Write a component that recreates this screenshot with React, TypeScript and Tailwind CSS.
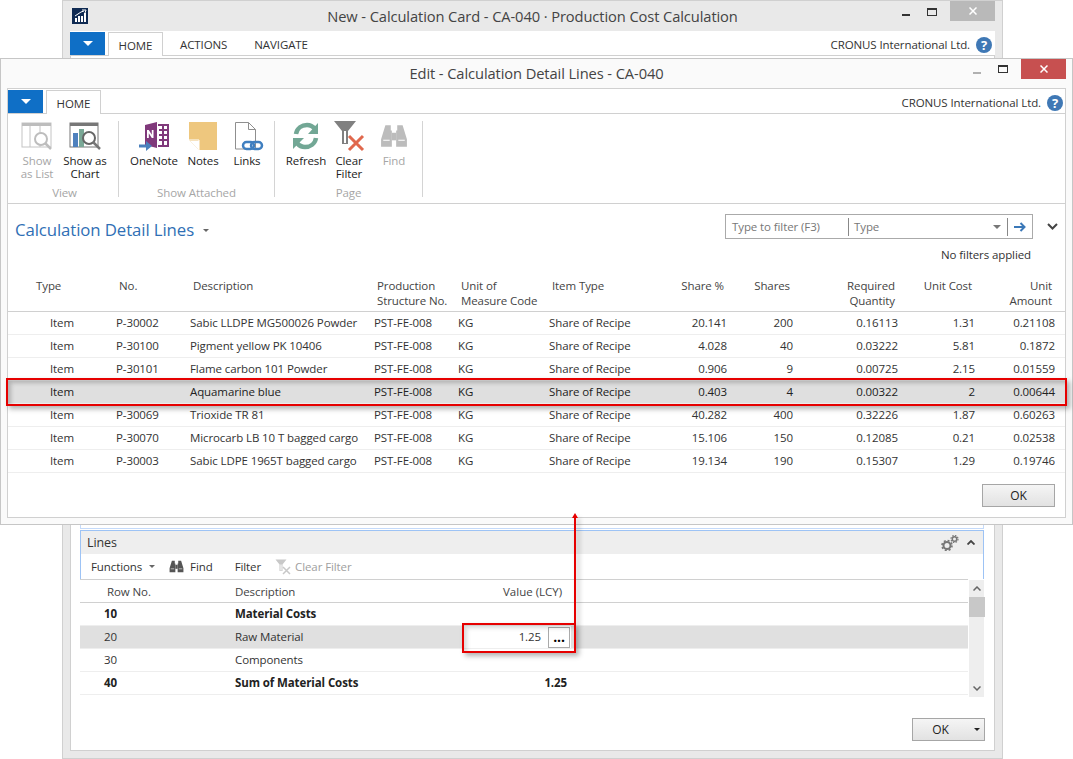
const F = "font-['Open_Sans','Noto_Sans',sans-serif]";

function Logo() {
  return (
    <svg width="16" height="16" viewBox="0 0 16 16" className="shrink-0">
      <rect width="16" height="16" fill="#0f2a52" />
      <rect x="3" y="10" width="2" height="4" fill="#fff" />
      <rect x="6" y="8" width="2" height="6" fill="#fff" />
      <rect x="9" y="8" width="2" height="6" fill="#fff" />
      <rect x="12" y="5" width="2" height="9" fill="#fff" />
      <path d="M3 8 L9 4 L12 3 M10 2 L14 2 L13 5" stroke="#fff" fill="none" strokeWidth="1" />
    </svg>
  );
}

function Help() {
  return (
    <span className="w-4 h-4 rounded-full bg-[#3f78b5] text-white text-[13px] font-bold leading-4 text-center block">?</span>
  );
}

function Caret() {
  return <span className="block w-0 h-0 border-x-[5px] border-x-transparent border-t-[5px] border-t-white" />;
}

function CloseX() {
  return (
    <svg width="8" height="8" viewBox="0 0 8 8" fill="none" stroke="#fff" strokeWidth="1.500"><path d="M.5.5l7 7M7.500.5l-7 7" /></svg>
  );
}

function ListIcon() {
  return (
    <svg width="32" height="28" viewBox="0 0 32 28">
      <rect x="1" y="1" width="29" height="24" fill="#fff" stroke="#c4c4c4" />
      <rect x="1" y="1" width="29" height="3" fill="#bdbdbd" />
      <path d="M9 4V25M19 4V25" stroke="#c4c4c4" />
      <circle cx="20" cy="17" r="6" fill="#fff" stroke="#bdbdbd" strokeWidth="2" />
      <path d="M24 21l6 6" stroke="#bdbdbd" strokeWidth="2.500" />
    </svg>
  );
}
function ChartIcon() {
  return (
    <svg width="32" height="28" viewBox="0 0 32 28">
      <rect x="1" y="1" width="28" height="24" fill="#fff" stroke="#777" />
      <rect x="1" y="1" width="28" height="3" fill="#777" />
      <rect x="4" y="11" width="5" height="14" fill="#4f81bd" />
      <rect x="10" y="7" width="5" height="18" fill="#7aa896" />
      <circle cx="20" cy="16" r="6" fill="#fff" stroke="#666" strokeWidth="2" />
      <path d="M24 20l7 7" stroke="#777" strokeWidth="2.500" />
    </svg>
  );
}
function OneNoteIcon() {
  return (
    <svg width="32" height="30" viewBox="0 0 32 30">
      <path d="M7 4 L19 1 V27 L7 24Z" fill="#80397b" />
      <path d="M20 4h10v21H20" fill="#fff" stroke="#80397b" strokeWidth="2" />
      <path d="M21 9h8M21 14h8M21 19h8M25 4v21" stroke="#80397b" strokeWidth="2" />
      <path d="M9 17V9h1.800l3 4.800V9h1.700v8h-1.700l-3-4.800V17z" fill="#fff" />
      <path d="M1 25h10" stroke="#4a80bc" strokeWidth="3" />
      <path d="M8 20l6 5-6 5z" fill="#4a80bc" />
    </svg>
  );
}
function NotesIcon() {
  return (
    <svg width="28" height="28" viewBox="0 0 28 28">
      <path d="M0 0h28v28H10L0 18z" fill="#eec77e" />
      <path d="M1 19h9v9z" fill="#fff" />
      <path d="M0 18h10v10" fill="none" stroke="#fff" />
    </svg>
  );
}
function LinksIcon() {
  return (
    <svg width="30" height="30" viewBox="0 0 30 30" className="ml-[3px]">
      <path d="M1.500 1.500h13l7 7V28h-20z" fill="#fff" stroke="#8f8f8f" />
      <path d="M14.500 1.500v7h7" fill="none" stroke="#8f8f8f" />
      <rect x="9" y="21" width="11" height="7" rx="3.500" fill="none" stroke="#3f7fc0" strokeWidth="2.500" />
      <rect x="17" y="21" width="11" height="7" rx="3.500" fill="none" stroke="#3f7fc0" strokeWidth="2.500" />
    </svg>
  );
}
function RefreshIcon() {
  return (
    <svg width="28" height="28" viewBox="0 0 28 28" fill="none">
      <path d="M4 12C5 6 10 3 15 3c3 0 6 1.500 8 4" stroke="#72a795" strokeWidth="4.500" />
      <path d="M26 1v11H16z" fill="#72a795" />
      <path d="M24 16c-1 6-6 9-11 9-3 0-6-1.500-8-4" stroke="#72a795" strokeWidth="4.500" />
      <path d="M1 27V16h11z" fill="#72a795" />
    </svg>
  );
}
function FilterXIcon({ small }: { small?: boolean }) {
  const s = small ? 16 : 32;
  return (
    <svg width={s} height={s} viewBox="0 0 32 32">
      <path d="M1 1h22L15 11v13h-6V11z" fill={small ? "#c8c8c8" : "#808080"} />
      <path d="M11 11h2v12h-2z" fill="#fff" />
      <path d="M16 16l14 14M30 16L16 30" stroke={small ? "#c8c8c8" : "#e0684d"} strokeWidth="3" />
    </svg>
  );
}
function BinocularsIcon({ color, size }: { color: string; size: number }) {
  return (
    <svg width={size} height={size} viewBox="0 0 26 26">
      <path d="M5 3h5v5h1v15H1v-7z" fill={color} />
      <path d="M21 3h-5v5h-1v15h10v-7z" fill={color} />
      <rect x="11" y="10" width="4" height="7" fill={color} />
      <path d="M3 17h6M17 17h6" stroke="#fff" />
    </svg>
  );
}
function Gears() {
  return (
    <svg width="18" height="16" viewBox="0 0 18 16" fill="none">
      <circle cx="6" cy="10.500" r="3.500" stroke="#777" strokeWidth="2" />
      <circle cx="6" cy="10.500" r="5" stroke="#777" strokeWidth="1.600" strokeDasharray="2 1.930" />
      <circle cx="13.500" cy="4" r="2.200" stroke="#777" strokeWidth="1.400" />
      <circle cx="13.500" cy="4" r="3.500" stroke="#777" strokeWidth="1.200" strokeDasharray="1.500 1.250" />
    </svg>
  );
}

function RibbonItem({ icon, label, width, disabled }: { icon: React.ReactNode; label: React.ReactNode; width: string; disabled?: boolean }) {
  return (
    <div className={`flex flex-col items-center shrink-0 ${width}`}>
      <div className="h-[30px] flex items-center justify-center">{icon}</div>
      <div className={`text-center leading-[13px] mt-[3px] whitespace-nowrap ${disabled ? "text-[#a6a6a6]" : "text-[#222]"}`}>{label}</div>
    </div>
  );
}

function Group({ label, children, width, pad }: { label: string; children: React.ReactNode; width: string; pad: string }) {
  return (
    <div className={`flex flex-col items-center border-r border-[#d4d4d4] h-[76px] shrink-0 ${width}`}>
      <div className={`flex flex-1 w-full justify-start ${pad}`}>{children}</div>
      <div className="text-[#a6a6a6] leading-[13px] -mb-[2px]">{label}</div>
    </div>
  );
}

const rows = [
  ["Item", "P-30002", "Sabic LLDPE MG500026 Powder", "20.141", "200", "0.16113", "1.31", "0.21108"],
  ["Item", "P-30100", "Pigment yellow PK 10406", "4.028", "40", "0.03222", "5.81", "0.1872"],
  ["Item", "P-30101", "Flame carbon 101 Powder", "0.906", "9", "0.00725", "2.15", "0.01559"],
  ["Item", "", "Aquamarine blue", "0.403", "4", "0.00322", "2", "0.00644"],
  ["Item", "P-30069", "Trioxide TR 81", "40.282", "400", "0.32226", "1.87", "0.60263"],
  ["Item", "P-30070", "Microcarb LB 10 T bagged cargo", "15.106", "150", "0.12085", "0.21", "0.02538"],
  ["Item", "P-30003", "Sabic LDPE 1965T bagged cargo", "19.134", "190", "0.15307", "1.29", "0.19746"],
];

const gridCols = "grid grid-cols-[100px_82px_184px_84px_91px_131px_47px_66px_105px_77px_80px]";

function DetailHeader() {
  return (
    <div className={`${gridCols} h-[42px] border-b border-[#d0d0d0] text-[#444] leading-[15px] pt-[8px]`}>
      <div className="pl-[28px]">Type</div>
      <div className="pl-[11px]">No.</div>
      <div className="pl-[3px]">Description</div>
      <div className="pl-[3px] whitespace-nowrap">Production<br />Structure No.</div>
      <div className="pl-[3px] whitespace-nowrap">Unit of<br />Measure Code</div>
      <div className="pl-[3px]">Item Type</div>
      <div className="text-right pr-[3px] whitespace-nowrap">Share %</div>
      <div className="text-right pr-[3px]">Shares</div>
      <div className="text-right pr-[3px]">Required<br />Quantity</div>
      <div className="text-right pr-[3px] whitespace-nowrap">Unit Cost</div>
      <div className="text-right pr-[3px]">Unit<br />Amount</div>
    </div>
  );
}

export default function App() {
  return (
    <div className={`${F} relative w-[1073px] h-[759px] overflow-hidden bg-white text-[11.5px] tracking-[-0.1px] text-[#333]`}>
      {/* back window */}
      <div className="absolute left-[62px] top-0 w-[941px] h-[759px] border border-[#d0d0d0] bg-[#e9e9e9] flex flex-col px-[7px] pb-[7px]">
        <div className="h-[30px] flex items-center relative shrink-0">
          <div className="absolute left-[2px] top-[7px]"><Logo /></div>
          <div className="flex-1 text-center text-[14.7px] text-[#444]">New - Calculation Card - CA-040 · Production Cost Calculation</div>
          <div className="absolute right-0 top-0 flex items-start">
            <span className="block w-2 h-[2px] bg-[#333] mt-[13px] mr-[17px]" />
            <span className="block w-[10px] h-[8px] border border-[#333] border-t-2 mt-[7px] mr-[13px]" />
            <span className="w-[45px] h-[20px] bg-[#b9b9b9] flex items-center justify-center"><CloseX /></span>
          </div>
        </div>
        <div className="h-[25px] bg-white flex shrink-0 items-start relative border-b border-[#d0d0d0]">
          <div className="w-[35px] h-[23px] mt-px bg-[#0f6fc6] flex items-center justify-center"><Caret /></div>
          <div className="ml-[3px] mt-px w-[55px] justify-center pt-[2px] border border-b-0 border-[#d0d0d0] flex items-center h-[24px] bg-white z-10 text-[#333]">HOME</div>
          <div className="ml-[17px] mt-px pt-[2px] h-[24px] flex items-center">ACTIONS</div>
          <div className="ml-[27px] mt-px pt-[2px] h-[24px] flex items-center">NAVIGATE</div>
          <div className="ml-auto mt-px pt-[2px] h-[24px] flex items-center gap-[6px] pr-[3px]"><span>CRONUS International Ltd.</span><Help /></div>
        </div>
        <div className="flex-1 bg-white border border-[#d0d0d0] border-t-0 pl-[9px] pr-[10px] pt-[469px] flex flex-col min-h-0">
          <div className="h-[4px] mb-px border border-t-0 border-[#c4dafa] shrink-0" />
          <div className="border border-[#9dc3f5] border-b-0 relative h-[49px] shrink-0">
            <div className="h-[23px] bg-[#eeeeee] flex items-center justify-between pl-[6px] pr-[8px] text-[12.500px]">
              <span className="pt-[2px]">Lines</span>
              <span className="flex items-center gap-[8px]">
                <Gears />
                <svg width="8" height="5" viewBox="0 0 8 5" fill="none" stroke="#444" strokeWidth="1.800"><path d="M.5 4.500L4 1l3.500 3.500" /></svg>
              </span>
            </div>
            <div className="h-[25px] flex items-center pl-[10px] text-[#333]">
              <span>Functions</span>
              <span className="block ml-[7px] w-0 h-0 border-x-[3px] border-x-transparent border-t-[3px] border-t-[#666]" />
              <span className="ml-[14px]"><BinocularsIcon color="#555" size={15} /></span>
              <span className="ml-[6px]">Find</span>
              <span className="ml-[22px]">Filter</span>
              <span className="ml-[14px]"><FilterXIcon small /></span>
              <span className="ml-[4px] text-[#a0a0a0]">Clear Filter</span>
            </div>
          </div>
          <div className="flex h-[118px] shrink-0">
            <div className="w-[888px] shrink-0">
              <div className="h-[24px] border-b border-t border-[#d0d0d0] flex items-center text-[#444] pt-px">
                <span className="w-[155px] pl-[27px]">Row No.</span>
                <span className="w-[268px]">Description</span>
                <span className="w-[64px] whitespace-nowrap tracking-normal">Value (LCY)</span>
              </div>
              {[
                ["10", "Material Costs", "", true, false],
                ["20", "Raw Material", "1.25", false, true],
                ["30", "Components", "", false, false],
                ["40", "Sum of Material Costs", "1.25", true, false],
              ].map(([n, d, v, b, sel]) => (
                <div key={n as string} className={`h-[23px] flex items-center border-b border-[#eeeeee] ${sel ? "bg-[#e0e0e0]" : ""} ${b ? "font-bold text-[#222]" : ""}`}>
                  <span className="w-[155px] pl-[24px]">{n}</span>
                  <span className="w-[229px] whitespace-nowrap">{d}</span>
                  {sel ? (
                    <span className="bg-white w-[108px] -ml-[1px] h-[22px] flex items-center justify-end pr-[1px] gap-[7px]">
                      <span>1.25</span>
                      <span className="w-[22px] h-[21px] border border-[#aaa] bg-white text-center font-bold text-[14px] leading-[18px] text-black">...</span>
                    </span>
                  ) : (
                    <span className="w-[103px] text-right">{v}</span>
                  )}
                </div>
              ))}
            </div>
            <div className="w-[16px] ml-[1px] mt-px bg-[#eeeeee] relative flex flex-col items-center justify-between py-[6px]">
              <svg width="8" height="5" viewBox="0 0 8 5" fill="none" stroke="#666" strokeWidth="1.500"><path d="M.5 4.500L4 1l3.500 3.500" /></svg>
              <svg width="8" height="5" viewBox="0 0 8 5" fill="none" stroke="#666" strokeWidth="1.500"><path d="M.5.5L4 4l3.500-3.500" /></svg>
              <span className="absolute left-0 top-[17px] w-[16px] h-[20px] bg-[#c8c8c8]" />
            </div>
          </div>
          <div className="flex justify-end mt-[21px] mr-[-1px]">
            <div className="w-[73px] h-[23px] border border-[#a6a6a6] bg-gradient-to-b from-[#f5f5f5] to-[#e2e2e2] flex items-center text-[#222] text-[12px] relative">
              <span className="w-[55px] text-center">OK</span>
              <span className="block w-0 h-0 border-x-[3px] border-x-transparent border-t-[3px] border-t-[#222] ml-[6px]" />
            </div>
          </div>
        </div>
      </div>

      {/* front window */}
      <div className="absolute left-0 top-[58px] w-[1073px] h-[467px] bg-[#fafafa] border border-[#c6c6c6] flex flex-col px-[6px] pb-[6px]">
        <div className="h-[29px] shrink-0 relative flex items-center justify-center text-[14.7px] text-[#444]">
          <span>Edit - Calculation Detail Lines - CA-040</span>
          <div className="absolute right-0 top-0 flex items-start">
            <span className="block w-2 h-[2px] bg-[#b0b0b0] mt-[13px] mr-[17px]" />
            <span className="block w-[10px] h-[8px] border border-[#333] border-t-2 mt-[6px] mr-[13px]" />
            <span className="w-[45px] h-[20px] bg-[#c75050] flex items-center justify-center"><CloseX /></span>
          </div>
        </div>
        <div className="h-[25px] bg-white flex shrink-0 items-start border-t border-x border-[#d0d0d0] relative">
          <div className="w-[35px] h-[23px] mt-px bg-[#0f6fc6] flex items-center justify-center"><Caret /></div>
          <div className="ml-[3px] mt-px w-[55px] justify-center pt-[2px] border border-b-0 border-[#d0d0d0] flex items-center h-[24px] bg-white z-10 text-[#333]">HOME</div>
          <div className="ml-auto mt-px pt-[2px] h-[24px] flex items-center gap-[6px] pr-[2px]"><span>CRONUS International Ltd.</span><Help /></div>
        </div>
        <div className="h-[91px] shrink-0 bg-white border border-[#d0d0d0] flex items-start pt-[7px] pl-[3px]">
          <Group label="View" width="w-[108px]" pad="">
            <RibbonItem width="w-[52px]" disabled icon={<ListIcon />} label={<>Show<br />as List</>} />
            <RibbonItem width="w-[44px]" icon={<ChartIcon />} label={<>Show as<br />Chart</>} />
          </Group>
          <Group label="Show Attached" width="w-[156px]" pad="pl-[5px]">
            <RibbonItem width="w-[60px]" icon={<OneNoteIcon />} label="OneNote" />
            <RibbonItem width="w-[38px]" icon={<NotesIcon />} label="Notes" />
            <RibbonItem width="w-[50px]" icon={<LinksIcon />} label="Links" />
          </Group>
          <Group label="Page" width="w-[148px]" pad="pl-[6px]">
            <RibbonItem width="w-[50px]" icon={<RefreshIcon />} label="Refresh" />
            <RibbonItem width="w-[36px]" icon={<FilterXIcon />} label={<>Clear<br />Filter</>} />
            <RibbonItem width="w-[54px]" disabled icon={<BinocularsIcon color="#bcbcbc" size={28} />} label="Find" />
          </Group>
        </div>
        <div className="flex-1 min-h-0 bg-white border border-t-0 border-[#d0d0d0] flex flex-col">
          <div className="h-[66px] shrink-0 flex flex-col">
            <div className="flex items-start pt-[10px] pl-[7px] pr-[7px] justify-between">
              <div className="flex items-center mt-[4px]">
                <span className="text-[16.800px] text-[#2f6fb5] leading-[24px]">Calculation Detail Lines</span>
                <span className="block ml-[9px] w-0 h-0 border-x-[3px] border-x-transparent border-t-[3px] border-t-[#666]" />
              </div>
              <div className="flex items-center">
                <div className="w-[308px] h-[25px] border border-[#aaa] flex items-center text-[#777]">
                  <span className="w-[123px] pl-[6px] border-r border-[#888] h-[18px] leading-[18px]">Type to filter (F3)</span>
                  <span className="pl-[5px] flex-1">Type</span>
                  <span className="block w-0 h-0 border-x-[4px] border-x-transparent border-t-[4px] border-t-[#777] mr-[6px]" />
                  <span className="w-[25px] h-[18px] border-l border-[#888] flex items-center justify-center">
                    <svg width="12" height="10" viewBox="0 0 12 10" fill="none" stroke="#3b78b8" strokeWidth="2"><path d="M0 5h10M6.500 1l4 4-4 4" /></svg>
                  </span>
                </div>
                <svg className="ml-[14px]" width="11" height="7" viewBox="0 0 11 7" fill="none" stroke="#444" strokeWidth="2"><path d="M1 1l4.500 4.500L10 1" /></svg>
              </div>
            </div>
            <div className="text-right pr-[34px] mt-[4px] text-[#333]">No filters applied</div>
          </div>
          <DetailHeader />
          {rows.map((r, i) => (
            <div key={i} className={`${gridCols} h-[23px] items-center border-b border-[#eeeeee] ${i === 3 ? "bg-[#dfdfdf] text-[#222]" : ""}`}>
              <div className="pl-[42px]">{r[0]}</div>
              <div className="pl-[8px]">{r[1]}</div>
              <div className="whitespace-nowrap">{r[2]}</div>
              <div>PST-FE-008</div>
              <div>KG</div>
              <div>Share of Recipe</div>
              <div className="text-right">{r[3]}</div>
              <div className="text-right">{r[4]}</div>
              <div className="text-right">{r[5]}</div>
              <div className="text-right">{r[6]}</div>
              <div className="text-right">{r[7]}</div>
            </div>
          ))}
          <div className="flex justify-end pr-[10px] pt-[11px]">
            <div className="w-[73px] h-[23px] border border-[#a6a6a6] bg-gradient-to-b from-[#f5f5f5] to-[#e2e2e2] text-center leading-[21px] text-[12px] text-[#222]">OK</div>
          </div>
        </div>
      </div>

      {/* annotations */}
      <div className="absolute left-[6px] top-[378px] w-[1061px] h-[28px] border-2 border-[#e60000] shadow-[3px_3px_5px_rgba(0,0,0,0.3),inset_3px_3px_4px_rgba(0,0,0,0.2)]" />
      <div className="absolute left-[462px] top-[623px] w-[114px] h-[30px] border-2 border-[#e60000] shadow-[3px_3px_5px_rgba(0,0,0,0.3),inset_3px_3px_4px_rgba(0,0,0,0.15)]" />
      <div className="absolute left-[574px] top-[515px] w-[2px] h-[108px] bg-[#e60000] shadow-[3px_3px_5px_rgba(0,0,0,0.3)]" />
      <div className="absolute left-[572px] top-[513px] w-0 h-0 border-x-[3px] border-x-transparent border-b-[5px] border-b-[#e60000]" />
    </div>
  );
}
